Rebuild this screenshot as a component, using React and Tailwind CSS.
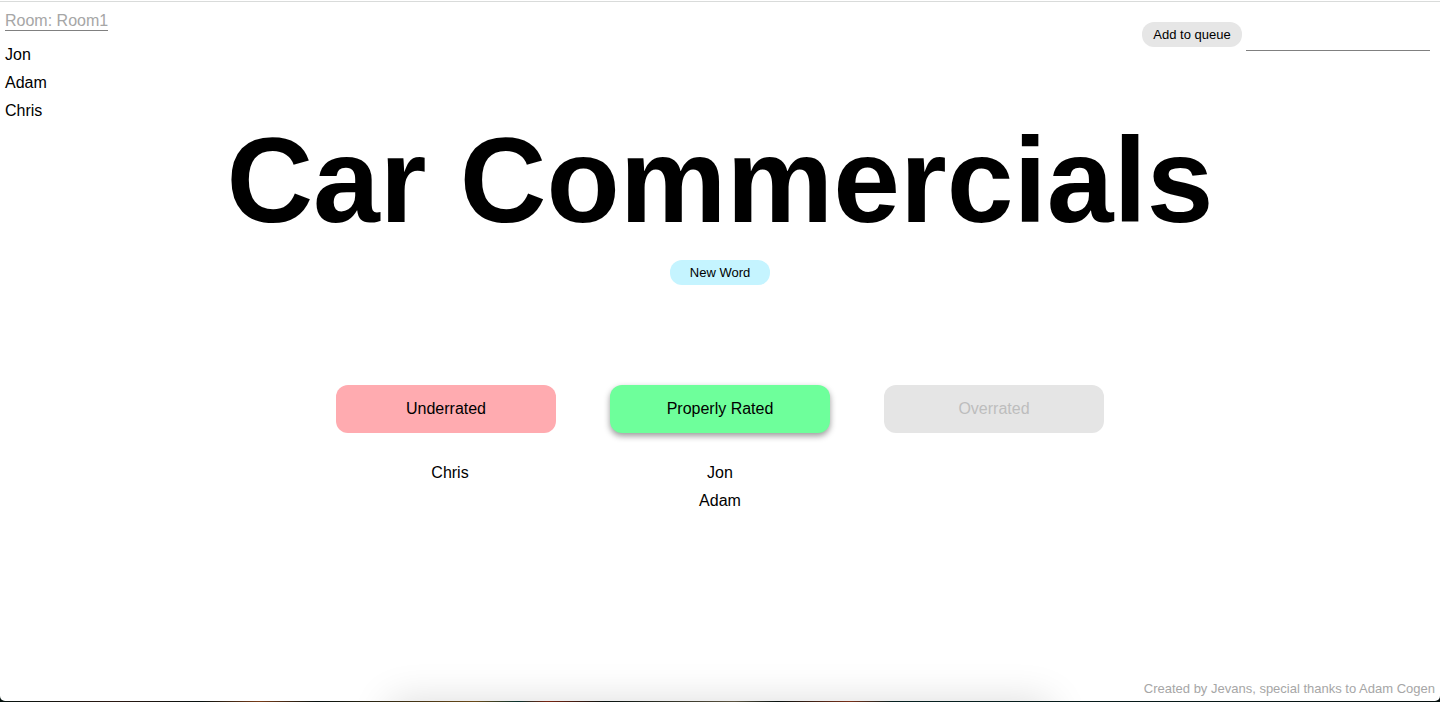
const players = ["Jon", "Adam", "Chris"];

const ratings = [
  {
    label: "Underrated",
    votes: ["Chris"],
    style: "bg-[#ffabb0] text-black",
  },
  {
    label: "Properly Rated",
    votes: ["Jon", "Adam"],
    style: "bg-[#6eff9b] text-black shadow-[0_3px_6px_rgba(0,0,0,0.4)]",
  },
  {
    label: "Overrated",
    votes: [],
    style: "bg-[#e5e5e5] text-[#bdbdbd]",
    disabled: true,
  },
];

function Header() {
  return (
    <header className="flex items-start justify-between border-t border-[#d9dbda] pt-[10px] pr-[10px] pl-[5px]">
      <section>
        <h2 className="w-fit border-b border-[#808080] leading-[18px] text-[#a6a6a6]">Room: Room1</h2>
        <ul className="mt-[10px] leading-7">
          {players.map((name) => (
            <li key={name}>{name}</li>
          ))}
        </ul>
      </section>
      <form className="flex gap-1 pt-[10px]" onSubmit={(e) => e.preventDefault()}>
        <button type="submit" className="h-[25px] w-[100px] rounded-xl bg-[#e6e6e6] text-[13px]">
          Add to queue
        </button>
        <input
          type="text"
          aria-label="Word to add"
          className="h-[29px] w-[184px] border-b border-[#808080] bg-transparent outline-none"
        />
      </form>
    </header>
  );
}

function Ratings() {
  return (
    <section className="mt-[100px] flex flex-col items-center">
      <div className="flex gap-[54px]">
        {ratings.map(({ label, style, disabled }) => (
          <button key={label} type="button" disabled={disabled} className={`h-12 w-[220px] rounded-xl ${style}`}>
            {label}
          </button>
        ))}
      </div>
      <div className="mt-[26px] flex text-center leading-7">
        {ratings.map(({ label, votes }) => (
          <ul key={label} className="w-[270px]">
            {votes.map((name) => (
              <li key={name}>{name}</li>
            ))}
          </ul>
        ))}
      </div>
    </section>
  );
}

export default function App() {
  return (
    <div className="flex min-h-screen flex-col bg-[linear-gradient(90deg,#06120f,#2a1812_8%,#08110f_14%,#7a3d18_18%,#08110f_22%,#6a4a18_33%,#08302c_36%,#7a2410_38%,#08110f_42%,#5a5340_51%,#08110f_54%,#7a3018_59%,#062020_62%,#06100f)] pb-px font-['Liberation_Sans',Arial,sans-serif] text-base text-black">
      <div className="relative flex grow flex-col overflow-hidden rounded-b-[5px] bg-white pt-px">
        <Header />
        <main className="flex grow flex-col items-center">
          <h1 className="text-center text-[120px] leading-[110px] font-bold">Car Commercials</h1>
          <button type="button" className="mt-[25px] h-[25px] w-[100px] rounded-xl bg-[#c5f4ff] text-[13px]">
            New Word
          </button>
          <Ratings />
        </main>
        <div className="pointer-events-none absolute top-full left-1/2 h-16 w-[660px] -translate-x-1/2 shadow-[0_0_40px_rgba(0,0,0,0.14)]" />
        <footer className="px-[5px] pb-[5px] text-right text-[13px] leading-[15px] text-[#a6a6a6]">
          Created by Jevans, special thanks to Adam Cogen
        </footer>
      </div>
    </div>
  );
}
